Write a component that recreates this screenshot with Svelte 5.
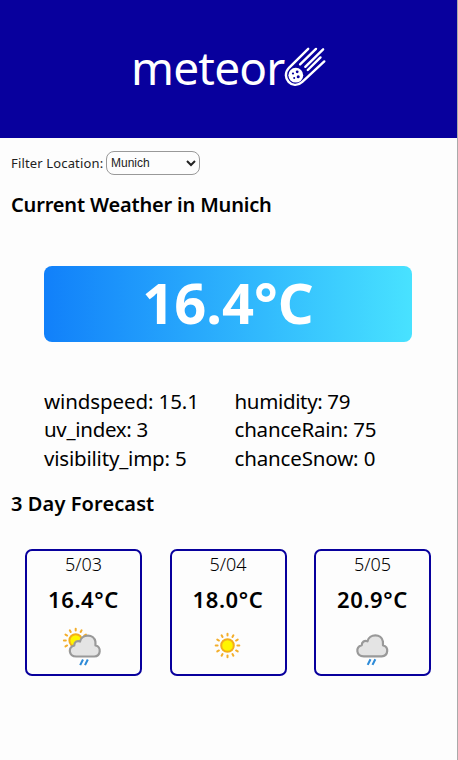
<script>
  let location = $state('Munich');
  const locations = ['Munich', 'Rotterdam', 'Tokyo'];
  const stats = [
    ['windspeed', '15.1', -0.1], ['humidity', '79', -0.35],
    ['uv_index', '3', -0.3], ['chanceRain', '75', -0.2],
    ['visibility_imp', '5', -0.2], ['chanceSnow', '0', -0.15]
  ];
  const days = [
    { date: '5/03', temp: '16.4', icon: 'mixed' },
    { date: '5/04', temp: '18.0', icon: 'sun' },
    { date: '5/05', temp: '20.9', icon: 'rain' }
  ];
  const rays = [0, 30, 60, 90, 120, 150, 180, 210, 240, 270, 300, 330];
</script>

{#snippet sun(x, y)}
  <g transform="translate({x} {y})">
    {#each rays as r}
      <path d="M0 -9.9V-11.8" transform="rotate({r})" stroke="#f3ae2b" stroke-width="2" stroke-linecap="round" />
    {/each}
    <circle r="6.3" fill="#fff500" stroke="#f3ae1b" stroke-width="2" />
  </g>
{/snippet}

{#snippet cloud()}
  <path d="M16.5 32C8.6 32 8 22.8 14.4 21C14.4 17.4 17.3 15.8 20.2 17C21.8 9.3 34.4 8.9 35.6 17.2L35.7 21C41.8 22 41.2 32 34.5 32Z" fill="#e4e4e4" stroke="#999" stroke-width="2.2" stroke-linejoin="round" />
  <path d="M23.2 35L20.4 40.6M28 35L25.2 40.6" stroke="#2e8bd8" stroke-width="2.1" />
{/snippet}

<div class="page">
  <header>
    <span class="brand">meteor</span>
    <svg class="comet" width="44" height="44" viewBox="0 0 44 44" fill="none" stroke="#fff" stroke-width="2.4" stroke-linecap="round">
      <path d="M25.2 3.8L6 22.8C-3 32.5 9.5 46 19.3 36.9L41.3 16.4M33 3.9L17.1 19.4M40.1 4.3L22.3 21.8M37.5 12.4L24.8 25" />
      <circle cx="12.8" cy="30.2" r="7.4" fill="#fff" stroke="none" />
      <g fill="#08009d" stroke="none"><circle cx="10" cy="28.5" r="1.1" /><circle cx="14.2" cy="26.8" r="1.4" /><circle cx="15.2" cy="31.8" r="1.5" /><circle cx="11.2" cy="32.9" r="1" /></g>
    </svg>
  </header>
  <main>
    <div class="filter">
      <label for="loc">Filter Location:</label>
      <select id="loc" bind:value={location}>
        {#each locations as l}<option>{l}</option>{/each}
      </select>
    </div>
    <h2 class="current">Current Weather in {location}</h2>
    <div class="hero"><span>16.4°C</span></div>
    <div class="stats">
      {#each stats as [name, value, tracking]}<div style="letter-spacing: {tracking}px">{name}: {value}</div>{/each}
    </div>
    <h2 class="forecast">3 Day Forecast</h2>
    <div class="cards">
      {#each days as day}
        <article>
          <div class="date">{day.date}</div>
          <div class="temp">{day.temp}°C</div>
          <svg width="50" height="46" viewBox="0 0 50 46" fill="none">
            {#if day.icon === 'mixed'}{@render sun(16.7, 16.5)}<g transform="translate(0.8 0.5)">{@render cloud()}</g>
            {:else if day.icon === 'sun'}{@render sun(24.5, 21.5)}
            {:else}<g transform="translate(-0.7 0.3)">{@render cloud()}</g>{/if}
          </svg>
        </article>
      {/each}
    </div>
  </main>
</div>

<style>
  :global(body) { background: #fdfdfd; }
  .page { box-sizing: border-box; width: 458px; height: 760px; border-right: 1px solid #aaa; background: #fdfdfd; font-family: "Noto Sans", sans-serif; color: #000; overflow: hidden; white-space: nowrap; }
  header { height: 138px; background: #08009d; color: #fff; display: flex; box-sizing: border-box; padding: 45px 0 0 131px; }
  .brand { width: 152px; font-size: 46px; line-height: 44px; letter-spacing: -0.8px; }
  .comet { flex: none; }
  .filter { height: 24px; padding: 13px 0 0 11px; display: flex; align-items: center; font-size: 13px; }
  label { width: 95px; letter-spacing: 0.15px; line-height: 18px; padding-bottom: 1px; color: #222; }
  select { box-sizing: border-box; width: 94px; height: 24px; border: 1px solid #999; border-radius: 8px; background: #fdfdfd; font: 12px "Liberation Sans", sans-serif; color: #222; padding: 0; }
  h2 { margin: 0; padding-left: 11px; font-size: 20px; line-height: 28px; font-weight: 600; }
  .current { padding-top: 16px; letter-spacing: -0.17px; }
  .hero { width: 368px; height: 76px; margin: 47px 0 0 44px; border-radius: 8px; background: linear-gradient(90deg, #1180fa, #48e2ff); color: #fff; font-size: 56px; font-weight: 700; line-height: 72px; text-align: center; }
  .stats { display: grid; grid-template-columns: 190.5px 1fr; grid-auto-rows: 28.3px; margin: 46px 0 0 44px; font-size: 20.5px; line-height: 26px; height: 86px; }
  .forecast { padding-top: 16px; letter-spacing: 0.1px; }
  .cards { display: flex; gap: 27.5px; padding: 31px 0 0 25px; }
  article { box-sizing: border-box; width: 117px; height: 127px; border: 2px solid #08009d; border-radius: 7px; display: flex; flex-direction: column; align-items: center; }
  .date { height: 27px; font-size: 18px; line-height: 27px; font-weight: 300; }
  .temp { height: 44px; font-size: 22px; line-height: 42px; font-weight: 600; letter-spacing: 0.6px; }
  article svg { flex: none; margin-top: 2px; }
</style>
